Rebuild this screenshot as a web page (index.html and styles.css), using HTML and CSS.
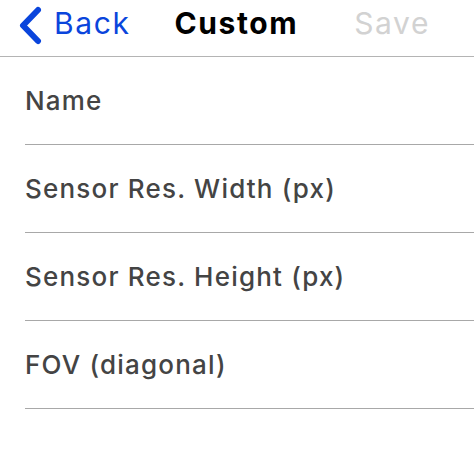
FILE: index.html
```html
<!DOCTYPE html>
<html>
<head>
<meta charset="utf-8">
<link rel="stylesheet" href="styles.css">
</head>
<body>
<div class="screen">
  <header class="nav">
    <a class="back">
      <svg class="chev" width="24" height="40" viewBox="0 0 24 40"><path d="M20 5 L5 20.5 L20 36" fill="none" stroke="#0a45dc" stroke-width="6" stroke-linecap="round" stroke-linejoin="round"/></svg>
      <span>Back</span>
    </a>
    <div class="title">Custom</div>
    <div class="save">Save</div>
  </header>
  <ul class="list">
    <li class="row">Name</li>
    <li class="row">Sensor Res. Width (px)</li>
    <li class="row">Sensor Res. Height (px)</li>
    <li class="row">FOV (diagonal)</li>
  </ul>
</div>
</body>
</html>
```
FILE: styles.css
```css
html, body { margin: 0; padding: 0; background: #fff; }
.screen { width: 474px; height: 471px; overflow: hidden; }
.nav {
  height: 46px;
  padding-bottom: 10px;
  border-bottom: 1px solid #b4b4b4;
  display: flex;
  align-items: center;
  font-family: "Inter", "Liberation Sans", sans-serif;
  font-size: 30px;
  letter-spacing: 1.6px;
}
.back {
  display: flex;
  align-items: center;
  color: #0a45dc;
  margin-left: 18px;
}
.chev { display: block; margin-right: 12px; margin-top: 3px; }
.title {
  font-weight: 700;
  color: #000;
  margin-left: 44px;
}
.save {
  color: #d2d2d2;
  margin-left: auto;
  margin-right: 44px;
}
.list { list-style: none; margin: 0; padding: 0 0 0 25px; }
.row {
  height: 87px;
  border-bottom: 1px solid #a8a8a8;
  display: flex;
  align-items: center;
  font-family: "Inter", sans-serif;
  font-weight: 500;
  font-size: 26px;
  letter-spacing: 1.2px;
  color: #444;
}
```
